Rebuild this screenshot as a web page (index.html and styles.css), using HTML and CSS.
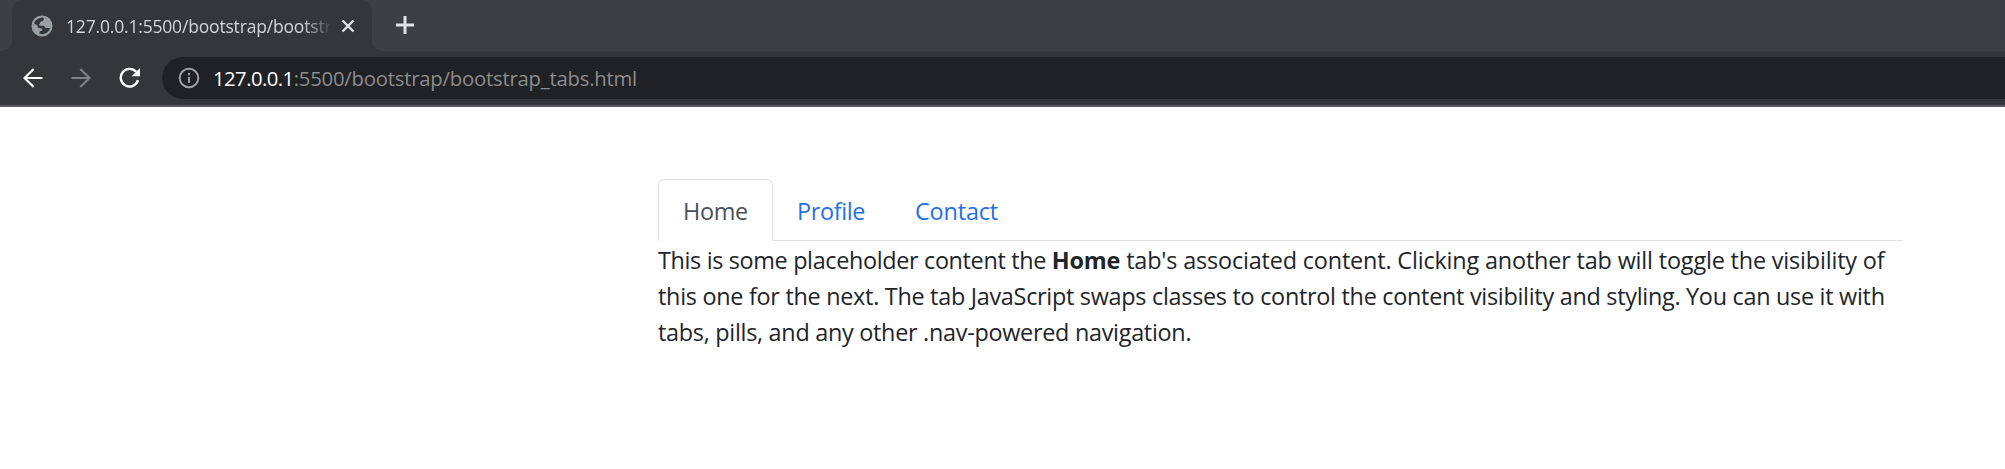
FILE: index.html
```
<!DOCTYPE html>
<html lang="en">
<head>
<meta charset="utf-8">
<title>Bootstrap tabs</title>
<link rel="stylesheet" href="styles.css">
</head>
<body>
<header class="browser">
  <div class="tab-strip">
    <div class="strip-edge"></div>
    <div class="tab-slot">
      <div class="browser-tab">
        <svg class="globe" viewBox="0 0 22 22"><circle cx="11" cy="11" r="10.5" fill="#9aa0a6"/><path d="M12 2.6C14 4 12.5 6 10.2 6.6C8.8 7 9.4 8.4 8.3 9.2C7.6 9.8 8.4 10.8 9.5 10.7H12.2C13.8 10.7 13.6 13 15.3 13.1H19C18.2 16.8 15 19.2 11.2 19.2C9.8 19.2 8.7 18.8 8.5 18.6V16.8C9.2 15.5 11 16.2 11.6 14.7C11.2 12.8 8 13.8 6.7 12.2L2.7 10.8C2.7 6.2 6.5 2.6 12 2.6Z" fill="#35363a"/><path d="M3 8.3L7.3 11.2C5.2 12 4 13 3.2 14ZM12.8 2.5C16.8 3.5 19.3 7 19.3 11.5L16.6 11.3C14.5 11 14.7 8.2 12.4 7.8C11.3 6.8 14.7 5.7 12.8 2.5Z" fill="#9aa0a6"/></svg>
        <span class="tab-title">127.0.0.1:5500/bootstrap/bootstr</span>
        <svg class="close" viewBox="0 0 14 14"><path d="M1.5 1.5L12.5 12.5M12.5 1.5L1.5 12.5"/></svg>
      </div>
    </div>
    <div class="strip-rest">
      <svg class="plus" viewBox="0 0 18 18"><path d="M9 0V18M0 9H18"/></svg>
    </div>
  </div>
  <div class="toolbar">
    <svg class="nav-icon back" viewBox="0 0 20 20"><path d="M19.5 10H1.5M10.7 1L1.5 10L10.7 19"/></svg>
    <svg class="nav-icon forward" viewBox="0 0 20 20"><path d="M.5 10H18.5M9.3 1L18.5 10L9.3 19"/></svg>
    <svg class="reload" viewBox="0 0 22 22"><path d="M19 13.2A8.8 8.8 0 1 1 17.2 4.9"/><path class="tip" d="M21 1V9.2H12.6Z"/></svg>
    <div class="omnibox">
      <svg class="info" viewBox="0 0 22 22"><circle cx="11" cy="11" r="9.3"/><path d="M11 10V16M11 6V8.3"/></svg>
      <span class="url"><b>127.0.0.1</b><span>:5500/bootstrap/bootstrap_tabs.html</span></span>
    </div>
  </div>
</header>
<main class="page">
  <nav class="tabs">
    <a class="tab active">Home</a>
    <a class="tab profile">Profile</a>
    <a class="tab contact">Contact</a>
  </nav>
  <p class="pane">
    <span class="line"><span class="lead">This is some placeholder content the </span><strong>Home</strong><span class="rest"> tab's associated content. Clicking another tab will toggle the visibility of</span></span>
    <span class="line">this one for the next. The tab JavaScript swaps classes to control the content visibility and styling. You can use it with</span>
    <span class="line">tabs, pills, and any other .nav-powered navigation.</span>
  </p>
</main>
</body>
</html>
```
FILE: styles.css
```
* { box-sizing: border-box; }
body { margin: 0; background: #fff; font-family: "Open Sans", "Noto Sans", sans-serif; color: #212529; }
svg { flex: none; fill: none; }

.browser { height: 107px; background: #35363a; border-bottom: 2px solid #5c5c60; }
.tab-strip { display: flex; height: 51px; }
.strip-edge { width: 12px; background: #3c4043; border-bottom-right-radius: 10px; }
.tab-slot { width: 360px; background: linear-gradient(#3c4043 50%, #35363a 50%); }
.browser-tab { display: flex; align-items: center; height: 51px; padding-left: 19px; background: #35363a; border-radius: 10px 10px 0 0; }
.globe { width: 22px; height: 22px; }
.tab-title {
  width: 263px;
  margin-left: 13px;
  white-space: nowrap;
  font-size: 17.5px;
  letter-spacing: -0.18px;
  color: #d3d4d6;
  -webkit-mask-image: linear-gradient(90deg, #000 236px, transparent 267px);
  mask-image: linear-gradient(90deg, #000 236px, transparent 267px);
}
.close { width: 14px; height: 14px; margin-left: 12px; stroke: #dee1e6; stroke-width: 2.4; }
.strip-rest { flex: 1; background: #3c4043; border-bottom-left-radius: 10px; padding: 16px 24px; }
.plus { width: 18px; height: 18px; stroke: #dee1e6; stroke-width: 3; display: block; }

.toolbar { display: flex; align-items: center; height: 54px; padding-left: 23px; }
.nav-icon { width: 20px; height: 20px; stroke: #fff; stroke-width: 2.2; }
.forward { stroke: #808184; margin-left: 28px; }
.reload { width: 22px; height: 22px; margin: 0 21px 0 28px; stroke: #fff; stroke-width: 2.4; }
.reload .tip { fill: #fff; stroke: none; }
.omnibox { flex: 1; height: 42px; background: #202124; border-radius: 21px 0 0 21px; display: flex; align-items: center; padding-left: 16px; }
.info { width: 22px; height: 22px; stroke: #9aa0a6; stroke-width: 2; }
.url { margin-left: 13px; font-size: 20.3px; letter-spacing: -0.21px; color: #8b8c8e; white-space: nowrap; }
.url b { font-weight: 400; letter-spacing: -0.55px; color: #fff; }

.page { padding: 72px 102px 0 658px; font-size: 23.4px; line-height: 36px; }
.tabs { display: flex; height: 62px; border-bottom: 1px solid #dee2e6; }
.tab { height: 62px; padding-top: 14px; padding-left: 25px; color: #2470e8; }
.active { width: 115px; padding-top: 13px; padding-left: 24px; letter-spacing: -0.3px; color: #495057; border: 1px solid #dee2e6; border-bottom-color: #fff; border-radius: 6px 6px 0 0; }
.profile { width: 117px; padding-left: 24px; letter-spacing: -0.35px; }
.contact { letter-spacing: -0.15px; }
.pane { margin: 1px 0 0; white-space: nowrap; }
.line { display: table; letter-spacing: -0.278px; }
.lead { letter-spacing: -0.34px; }
.line strong { letter-spacing: -0.15px; }
.rest { letter-spacing: -0.16px; }
```
